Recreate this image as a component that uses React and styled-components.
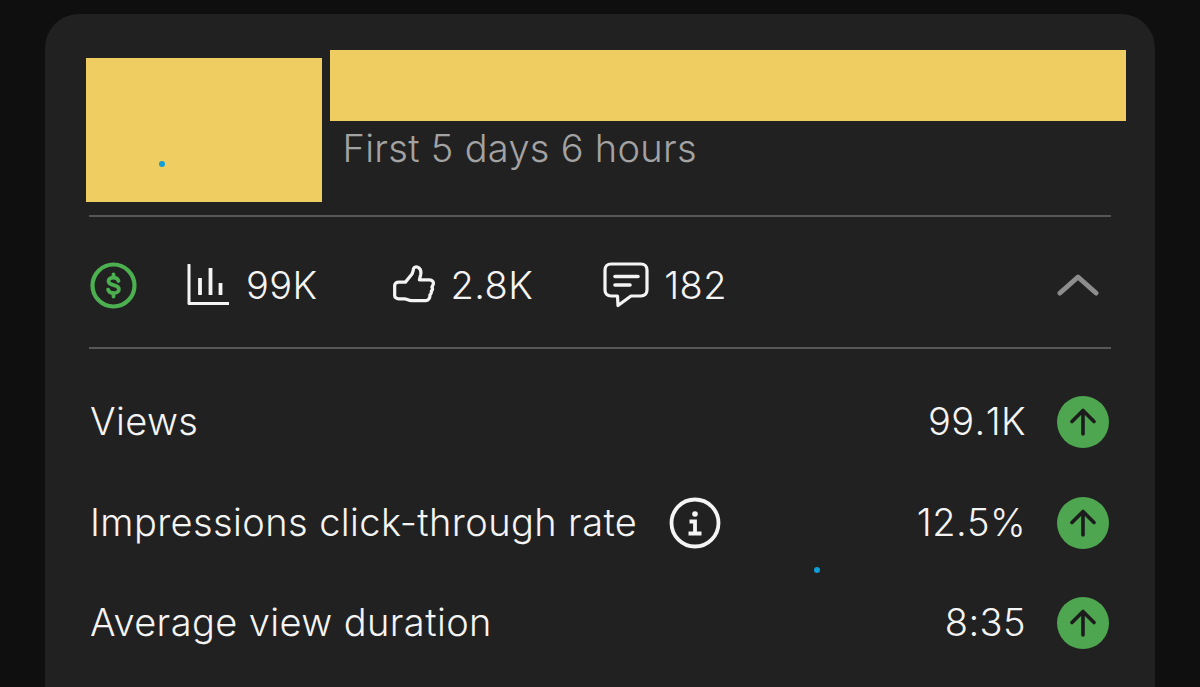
import React from "react";
import styled, { createGlobalStyle } from "styled-components";

const Global = createGlobalStyle`
  html, body {
    margin: 0;
    height: 100%;
    background: #0f0f0f;
    overflow: hidden;
  }
`;

const Page = styled.div`
  position: relative;
  height: 687px;
  padding: 14px 45px 0;
  box-sizing: border-box;
  font-family: Inter, Roboto, "Liberation Sans", sans-serif;
  font-weight: 300;
  font-size: 38px;
  letter-spacing: 0.4px;
  overflow: hidden;
`;

const Card = styled.div`
  height: 720px;
  padding: 36px 44px 0;
  box-sizing: border-box;
  background: #212121;
  border-radius: 34px;
`;

const Head = styled.div`
  display: flex;
  gap: 8px;
  margin: 0 -15px 0 -3px;
  height: 165px;
`;

const Thumb = styled.div`
  position: relative;
  flex: 0 0 236px;
  height: 144px;
  margin-top: 7.5px;
  background: #f0cd60;
`;

const Dot = styled.span`
  position: absolute;
  width: 6px;
  height: 6px;
  border-radius: 50%;
  background: #109ed8;
`;

const ThumbDot = styled(Dot)`
  left: 73px;
  top: 103px;
`;

const FloatDot = styled(Dot)`
  left: 814px;
  top: 567px;
`;

const HeadText = styled.div`
  flex: 1;
`;

const TitleBlock = styled.div`
  height: 71px;
  background: #f0cd60;
`;

const Subtitle = styled.div`
  margin: 5px 0 0 12.5px;
  line-height: 44px;
  letter-spacing: 0.3px;
  color: #a3a3a3;
`;

const Divider = styled.div`
  height: 2px;
  background: #575757;
`;

const Stats = styled.div`
  display: flex;
  align-items: center;
  height: 130px;
  padding-top: 5px;
  box-sizing: border-box;
  color: #f4f4f4;
`;

const Stat = styled.div`
  display: flex;
  align-items: center;
  gap: ${(p) => p.$gap}px;
  margin-left: ${(p) => p.$left}px;
`;

const Chevron = styled.svg`
  margin-left: auto;
  margin-right: 12px;
`;

const Rows = styled.div`
  display: flex;
  flex-direction: column;
  padding-top: 23px;
`;

const Row = styled.div`
  display: flex;
  align-items: center;
  height: 100.5px;
  color: #f4f4f4;
`;

const Label = styled.div`
  margin-left: 1px;
  padding-bottom: 2px;
`;

const Info = styled.svg`
  margin-left: 32px;
`;

const Value = styled.div`
  margin-left: auto;
  margin-right: 31px;
  padding-bottom: 2px;
  font-kerning: none;
`;

const Badge = styled.div`
  display: flex;
  align-items: center;
  justify-content: center;
  width: 52px;
  height: 52px;
  margin-right: 2px;
  border-radius: 50%;
  background: #4ea750;
`;

const Dollar = () => (
  <svg width="48" height="48" viewBox="0 0 48 48" fill="none" stroke="#4caf50">
    <circle cx="24.500" cy="24.500" r="21" strokeWidth="4.200" />
    <path
      d="M29.500 20c-.6-2.200-2.600-3.400-5-3.400-2.900 0-5 1.400-5 3.700 0 5 10.400 2.600 10.400 7.900 0 2.400-2.300 3.900-5.400 3.900-2.700 0-4.800-1.200-5.400-3.400M24.500 13.500v3M24.500 32v3.500"
      strokeWidth="3.800"
      strokeLinecap="round"
    />
  </svg>
);

const Bars = () => (
  <svg width="42" height="42" viewBox="0 0 42 42" fill="none" stroke="#f4f4f4" strokeWidth="3">
    <path d="M2 1v38.500h39.500" strokeLinecap="round" strokeLinejoin="round" />
    <path d="M13 14v17M23.500 4v27M33.500 19v12" strokeWidth="3.800" />
  </svg>
);

const Thumbs = () => (
  <svg width="42" height="40" viewBox="0 0 44 42" fill="none" stroke="#f4f4f4" strokeWidth="3.400" strokeLinejoin="round" strokeLinecap="round">
    <path d="M13 18 19.500 10c1.500-2 1.500-4.500 2.200-6.500.6-1.500 2.800-2 4.600-1 2.700 1.400 3.300 4.500 2.700 7.500l-1.300 5.500h10.500c3.200 0 4.600 2.400 4 4.800l-1.400 3c1 1.500.7 3-.6 4.200.3 1.800-.3 3-1.500 4 .3 2.600-1.300 5.800-3.900 5.800H19c-2.500 0-4.500-1.800-7-1.800H6c-2.500 0-4.300-1.500-4.300-3.500V21.500C1.700 19.500 3.500 18 6 18z" />
  </svg>
);

const Comment = () => (
  <svg width="48" height="46" viewBox="0 0 48 46" fill="none" stroke="#f4f4f4" strokeLinecap="round" strokeLinejoin="round">
    <path d="M8 2h30c3.500 0 6 2.500 6 6v20c0 3.500-2.500 6-6 6H28L15 43.500 14.500 34H8c-3.500 0-6-2.500-6-6V8c0-3.500 2.500-6 6-6z" strokeWidth="3.200" />
    <path d="M12 14.500h23M12 23h15" strokeWidth="3.600" />
  </svg>
);

const InfoIcon = () => (
  <Info width="52" height="52" viewBox="0 0 52 52" fill="none" stroke="#f4f4f4">
    <circle cx="26" cy="26" r="23.500" strokeWidth="3.800" />
    <circle cx="26" cy="17" r="2.800" fill="#f4f4f4" stroke="none" />
    <path d="M20.500 24.500H26v12M19.500 36.500h13" strokeWidth="3.800" />
  </Info>
);

const Up = () => (
  <svg width="28" height="28" viewBox="0 0 28 28" fill="none" stroke="#1c1c1c" strokeWidth="3.600" strokeLinecap="round" strokeLinejoin="round">
    <path d="M14 26V3M3 13.500 14 2.500l11 11" />
  </svg>
);

const rows = [
  { label: "Views", value: "99.1K" },
  { label: "Impressions click-through rate", value: "12.5%", info: true },
  { label: "Average view duration", value: "8:35" },
];

export default function App() {
  return (
    <Page>
      <Global />
      <Card>
        <Head>
          <Thumb>
            <ThumbDot />
          </Thumb>
          <HeadText>
            <TitleBlock />
            <Subtitle>First 5 days 6 hours</Subtitle>
          </HeadText>
        </Head>
        <Divider />
        <Stats>
          <Dollar />
          <Stat $left={50} $gap={17}>
            <Bars />
            99K
          </Stat>
          <Stat $left={75} $gap={16}>
            <Thumbs />
            2.8K
          </Stat>
          <Stat $left={70} $gap={13}>
            <Comment />
            182
          </Stat>
          <Chevron width="42" height="24" viewBox="0 0 42 24" fill="none" stroke="#8d8d8d" strokeWidth="5" strokeLinecap="round" strokeLinejoin="round">
            <path d="M3 20 21 4l18 16" />
          </Chevron>
        </Stats>
        <Divider />
        <Rows>
          {rows.map((r) => (
            <Row key={r.label}>
              <Label>{r.label}</Label>
              {r.info && <InfoIcon />}
              <Value>{r.value}</Value>
              <Badge>
                <Up />
              </Badge>
            </Row>
          ))}
        </Rows>
      </Card>
      <FloatDot />
    </Page>
  );
}
